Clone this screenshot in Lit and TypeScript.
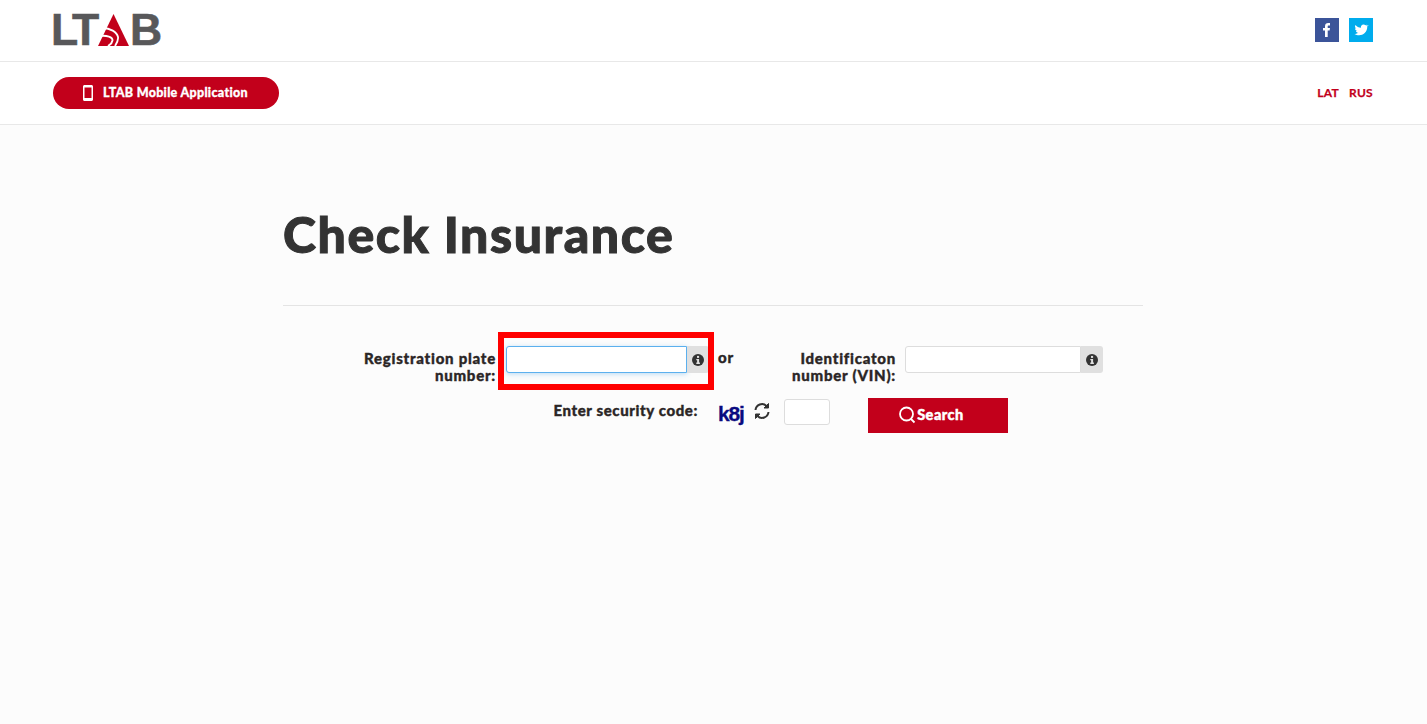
import { LitElement, html, css, svg } from "lit";
import { customElement } from "lit/decorators.js";

const info = svg`<svg width="12" height="12" viewBox="0 0 12 12"><circle cx="6" cy="6" r="6" fill="#333"/><rect x="5" y="1.9" width="2.1" height="2" fill="#e0e0e0"/><path d="M4.3 5h2.8v3.6h.8v1.3H4.3V8.6h.8V6.3h-.8z" fill="#e0e0e0"/></svg>`;

@customElement("app-root")
export class AppRoot extends LitElement {
  static styles = css`
    :host { display: block; min-height: 724px; background: #fcfcfc; font-family: "Lato", "Open Sans", sans-serif; color: #2b2626; }
    .bar { background: #fff; border-bottom: 1px solid #e8e8e8; padding: 0 54px 0 53px; display: flex; align-items: center; justify-content: space-between; box-sizing: border-box; }
    .top { height: 62px; }
    .nav { height: 63px; }
    .logo { display: flex; align-items: center; height: 32px; margin: -1px 0 0 -2px; font: 700 44.5px/32px "Liberation Sans", sans-serif; color: #58585a; }
    .lt { letter-spacing: -3px; -webkit-text-stroke: .6px #58585a; }
    .b { -webkit-text-stroke: .6px #58585a; margin-left: 1px; }
    .logo svg { margin: -1px 0 0 2px; }
    .social { display: flex; gap: 10px; margin-top: -2px; }
    .social svg { display: block; }
    .app { width: 226px; height: 32px; margin-top: -1px; border-radius: 16px; background: #c2001b; color: #fff; display: flex; align-items: center; padding-left: 30px; box-sizing: border-box; gap: 10px; font-size: 12.5px; font-weight: 900; letter-spacing: .3px; -webkit-text-stroke: .3px #fff; }
    .lang { display: flex; gap: 10px; color: #c2001b; font: 700 12px "Lato", sans-serif; letter-spacing: .3px; margin-top: -1px; -webkit-text-stroke: .25px #c2001b; }
    main { width: 860px; margin: 0 auto; position: relative; left: -.5px; }
    h1 { margin: 0; padding: 79px 0 41px 0; font-size: 50px; line-height: 60px; font-weight: 900; color: #333; letter-spacing: 1.55px; -webkit-text-stroke: 1px #333; border-bottom: 1px solid #e4e4e4; }
    .form { position: relative; height: 128px; font-size: 15px; font-weight: 900; line-height: 17px; letter-spacing: .75px; -webkit-text-stroke: .35px #2b2626; }
    .row { display: flex; align-items: flex-start; }
    .row > * { flex: none; }
    .r1 { padding: 40px 0 0 60px; }
    .r2 { padding: 14px 0 0 0; }
    .label { text-align: right; box-sizing: border-box; }
    .l1 { width: 153px; margin-top: 4px; }
    .l2 { width: 119px; margin: 4px 9px 0 0; }
    .or { margin: 3px 0 0 9px; width: 59px; }
    .group { display: flex; height: 27px; }
    .g1 { margin-left: 10px; width: 203px; }
    .g2 { width: 198px; }
    .group input { flex: 1; min-width: 0; }
    input { box-sizing: border-box; margin: 0; padding: 0 6px; background: #fff; border: 1px solid #ddd; border-radius: 3px 0 0 3px; outline: none; }
    .focus { border-color: #5cb0ee; box-shadow: 0 1px 5px rgba(102,175,233,.45); }
    .addon { width: 22px; background: #e0e0e0; border-radius: 0 3px 3px 0; display: flex; align-items: center; justify-content: center; }
    .l3 { width: 415px; margin-top: 3px; letter-spacing: .6px; line-height: 18px; }
    .captcha { margin: 4px 9px 0 20px; width: 26px; font: 700 21px/24px "Liberation Sans", sans-serif; letter-spacing: -1.2px; color: #0a0a80; -webkit-text-stroke: .3px #0a0a80; }
    .refresh { width: 18px; height: 18px; margin: 4px 13px 0 0; }
    .code { width: 46px; height: 26px; margin-top: 1px; border-radius: 3px; }
    .search { width: 140px; height: 35px; margin-left: 38px; border: 0; padding: 0 14px 2px 0; background: #c2001b; color: #fff; display: flex; align-items: center; justify-content: center; gap: 1px; font: 900 14.5px "Lato", sans-serif; letter-spacing: .5px; -webkit-text-stroke: .45px #fff; }
    .mark { position: absolute; left: 215px; top: 26px; width: 216px; height: 58px; box-sizing: border-box; border: 6px solid #f00; pointer-events: none; }
  `;

  render() {
    return html`
      <header class="bar top">
        <div class="logo" aria-label="LTAB">
          <span class="lt">LT</span>
          <svg width="31" height="32" viewBox="0 0 31 32" fill="none"><path d="M15.500 0 31 32H0z" fill="#c2001b"/><path d="M1 22c8-1 14 1 13.500 4.500-.3 2-2 4-4.500 5.500M5 14c7 0 14 4 15 9 .5 3-1 6-3 9" stroke="#fff" stroke-width="1.800"/></svg>
          <span class="b">B</span>
        </div>
        <div class="social">
          <svg width="24" height="24" viewBox="0 0 24 24"><rect width="24" height="24" fill="#3b5499"/><path d="M10 19v-6.500H8V10h2V8.300C10 6 11.300 5 13.200 5H15v2.500h-1.200c-.9 0-1.100.4-1.100 1.100V10H15l-.4 2.500h-1.900V19z" fill="#fff"/></svg>
          <svg width="24" height="24" viewBox="0 0 24 24"><rect width="24" height="24" fill="#00aced"/><path d="M18.500 7.600c-.5.2-1 .4-1.500.4.500-.3 1-.8 1.200-1.400-.5.300-1.100.5-1.700.7a2.700 2.700 0 0 0-4.600 2.400c-2.200-.1-4.200-1.200-5.500-2.800-.7 1.200-.4 2.800.8 3.600-.4 0-.8-.1-1.200-.3 0 1.300.9 2.400 2.100 2.700-.4.100-.8.100-1.200 0 .3 1.100 1.300 1.800 2.500 1.900-1.100.9-2.500 1.300-3.900 1.100 4.700 3 12.800 1 12.800-7.600.6-.4 1.100-.9 1.400-1.400z" fill="#fff"/></svg>
        </div>
      </header>
      <nav class="bar nav">
        <div class="app">
          <svg width="10" height="16" viewBox="0 0 10 16"><path fill="#fff" fill-rule="evenodd" d="M1.500 0h7C9.300 0 10 .7 10 1.500v13c0 .8-.7 1.500-1.500 1.500h-7C.7 16 0 15.300 0 14.500v-13C0 .7.700 0 1.500 0zM1.500 2.500v10.500h7V2.500z"/></svg>
          <span>LTAB Mobile Application</span>
        </div>
        <div class="lang"><span>LAT</span><span>RUS</span></div>
      </nav>
      <main>
        <h1>Check Insurance</h1>
        <div class="form">
          <div class="row r1">
            <div class="label l1">Registration plate number:</div>
            <div class="group g1"><input class="focus" /><span class="addon">${info}</span></div>
            <div class="or">or</div>
            <div class="label l2">Identificaton number (VIN):</div>
            <div class="group g2"><input /><span class="addon">${info}</span></div>
          </div>
          <div class="row r2">
            <div class="label l3">Enter security code:</div>
            <div class="captcha">k8j</div>
            <svg class="refresh" viewBox="0 0 18 18" fill="none" stroke="#333" stroke-width="2"><path d="M2.500 8A6.500 6.500 0 0 1 13.500 4"/><path d="M15.500 10A6.500 6.500 0 0 1 4.500 14"/><path d="M15.500 1.500v4.500h-4.500z" fill="#333" stroke-width="1"/><path d="M2.500 16.500v-4.500h4.500z" fill="#333" stroke-width="1"/></svg>
            <input class="code" style="border-radius:3px" />
            <button class="search">
              <svg width="18" height="18" viewBox="0 0 18 18" fill="none" stroke="#fff" stroke-width="1.800"><circle cx="8.500" cy="8" r="6.500"/><path d="M13 13l3.500 3.500"/></svg>
              <span>Search</span>
            </button>
          </div>
          <div class="mark"></div>
        </div>
      </main>
    `;
  }
}
